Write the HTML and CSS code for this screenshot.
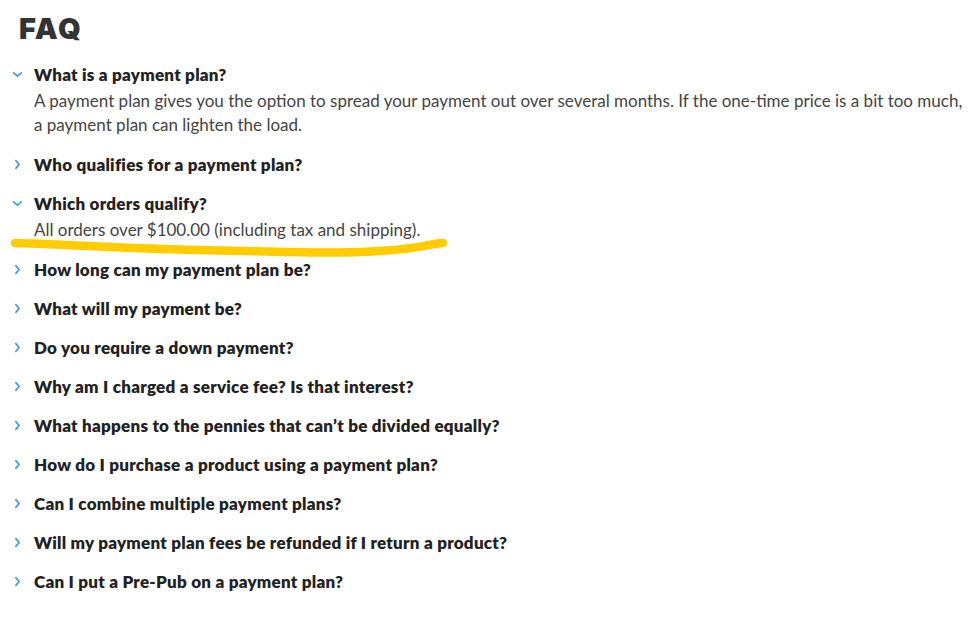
FILE: index.html
```html
<!DOCTYPE html>
<html lang="en">
<head>
<meta charset="utf-8">
<title>FAQ</title>
<link rel="stylesheet" href="styles.css">
</head>
<body>
<main class="faq">
  <h1 class="faq-title">FAQ</h1>
  <ul class="faq-list">
    <li class="faq-item open">
      <div class="faq-q"><svg class="chev" viewBox="0 0 10 10"><path d="M1.5 3.5 L5 6.5 L8.5 3.5"/></svg><span>What is a payment plan?</span></div>
      <p class="faq-a">A payment plan gives you the option to spread your payment out over several months. If the one-time price is a bit too much, a payment plan can lighten the load.</p>
    </li>
    <li class="faq-item">
      <div class="faq-q"><svg class="chev" viewBox="0 0 10 10"><path d="M3.5 1.5 L6.5 5 L3.5 8.5"/></svg><span>Who qualifies for a payment plan?</span></div>
    </li>
    <li class="faq-item open">
      <div class="faq-q"><svg class="chev" viewBox="0 0 10 10"><path d="M1.5 3.5 L5 6.5 L8.5 3.5"/></svg><span>Which orders qualify?</span></div>
      <p class="faq-a">All orders over $100.00 (including tax and shipping).</p>
    </li>
    <li class="faq-item">
      <div class="faq-q"><svg class="chev" viewBox="0 0 10 10"><path d="M3.5 1.5 L6.5 5 L3.5 8.5"/></svg><span>How long can my payment plan be?</span></div>
    </li>
    <li class="faq-item">
      <div class="faq-q"><svg class="chev" viewBox="0 0 10 10"><path d="M3.5 1.5 L6.5 5 L3.5 8.5"/></svg><span>What will my payment be?</span></div>
    </li>
    <li class="faq-item">
      <div class="faq-q"><svg class="chev" viewBox="0 0 10 10"><path d="M3.5 1.5 L6.5 5 L3.5 8.5"/></svg><span>Do you require a down payment?</span></div>
    </li>
    <li class="faq-item">
      <div class="faq-q"><svg class="chev" viewBox="0 0 10 10"><path d="M3.5 1.5 L6.5 5 L3.5 8.5"/></svg><span>Why am I charged a service fee? Is that interest?</span></div>
    </li>
    <li class="faq-item">
      <div class="faq-q"><svg class="chev" viewBox="0 0 10 10"><path d="M3.5 1.5 L6.5 5 L3.5 8.5"/></svg><span>What happens to the pennies that can’t be divided equally?</span></div>
    </li>
    <li class="faq-item">
      <div class="faq-q"><svg class="chev" viewBox="0 0 10 10"><path d="M3.5 1.5 L6.5 5 L3.5 8.5"/></svg><span>How do I purchase a product using a payment plan?</span></div>
    </li>
    <li class="faq-item">
      <div class="faq-q"><svg class="chev" viewBox="0 0 10 10"><path d="M3.5 1.5 L6.5 5 L3.5 8.5"/></svg><span>Can I combine multiple payment plans?</span></div>
    </li>
    <li class="faq-item">
      <div class="faq-q"><svg class="chev" viewBox="0 0 10 10"><path d="M3.5 1.5 L6.5 5 L3.5 8.5"/></svg><span>Will my payment plan fees be refunded if I return a product?</span></div>
    </li>
    <li class="faq-item">
      <div class="faq-q"><svg class="chev" viewBox="0 0 10 10"><path d="M3.5 1.5 L6.5 5 L3.5 8.5"/></svg><span>Can I put a Pre-Pub on a payment plan?</span></div>
    </li>
  </ul>
  <svg class="squiggle" viewBox="0 0 978 619" aria-hidden="true"><path d="M15 243 C 60 244, 110 248, 200 250 S 330 254, 380 251 S 425 244, 443 243"/></svg>
</main>
</body>
</html>
```
FILE: styles.css
```css
html, body {
  margin: 0;
  padding: 0;
  background: #ffffff;
}
body {
  font-family: Lato, "Source Sans Pro", "Noto Sans", sans-serif;
  color: #333333;
}
.faq {
  position: relative;
  width: 978px;
  height: 619px;
  padding: 12px 0 0 0;
  box-sizing: border-box;
}
.faq-title {
  margin: 0 0 0 19px;
  font-family: Inter, sans-serif;
  font-weight: 900;
  font-size: 29px;
  line-height: 34px;
  letter-spacing: 1.5px;
  color: #333333;
}
.faq-list {
  list-style: none;
  margin: 16px 0 0 0;
  padding: 0;
  display: flex;
  flex-direction: column;
  gap: 15px;
}
.faq-q {
  display: flex;
  align-items: center;
  height: 24px;
  font-weight: 800;
  font-size: 17px;
  letter-spacing: 0.25px;
  color: #222222;
}
.chev {
  width: 11px;
  height: 11px;
  margin: 0 11px 0 12px;
  fill: none;
  stroke: #3d9be0;
  stroke-width: 1.5;
  stroke-linecap: round;
  stroke-linejoin: round;
}
.faq-a {
  width: 934px;
  margin: 3px 0 0 34px;
  font-size: 17px;
  line-height: 24px;
  color: #444444;
}
.squiggle {
  position: absolute;
  left: 0;
  top: 0;
  width: 978px;
  height: 619px;
  pointer-events: none;
}
.squiggle path {
  fill: none;
  stroke: #ffcc00;
  stroke-width: 8.5;
  stroke-linecap: round;
  stroke-linejoin: round;
}
```
